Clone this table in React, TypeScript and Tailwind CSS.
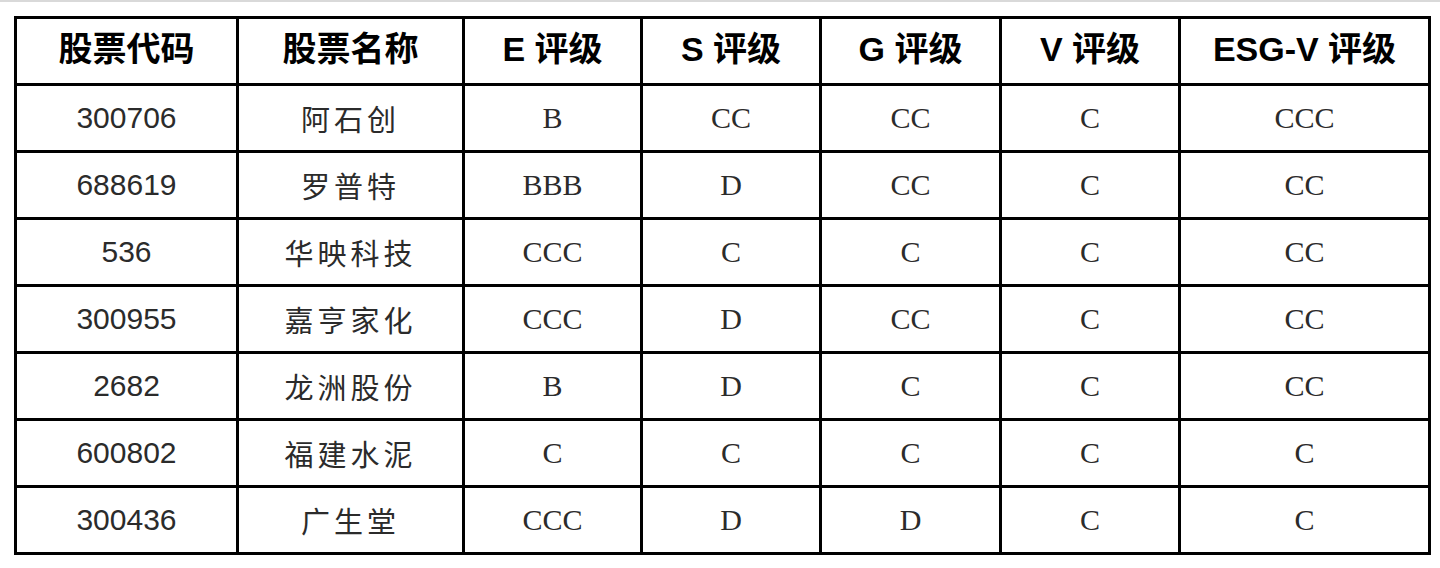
const rows = [
  ['300706', '阿石创', 'B', 'CC', 'CC', 'C', 'CCC'],
  ['688619', '罗普特', 'BBB', 'D', 'CC', 'C', 'CC'],
  ['536', '华映科技', 'CCC', 'C', 'C', 'C', 'CC'],
  ['300955', '嘉亨家化', 'CCC', 'D', 'CC', 'C', 'CC'],
  ['2682', '龙洲股份', 'B', 'D', 'C', 'C', 'CC'],
  ['600802', '福建水泥', 'C', 'C', 'C', 'C', 'C'],
  ['300436', '广生堂', 'CCC', 'D', 'D', 'C', 'C'],
];

const headers = ['股票代码', '股票名称', 'E 评级', 'S 评级', 'G 评级', 'V 评级', 'ESG-V 评级'];
const widths = [222, 226, 178, 179, 180, 179, 250];

export default function App() {
  return (
    <div className="min-h-[568px] w-[1440px] bg-white">
      <div className="h-[2px] bg-[#d9d9d9]" />
      <div className="pl-[14px] pt-[14px]">
        <table className="border-collapse border-[3px] border-black text-center">
          <colgroup>
            {widths.map((w, i) => (
              <col key={i} style={{ width: w }} />
            ))}
          </colgroup>
          <thead>
            <tr>
              {headers.map((h) => (
                <th
                  key={h}
                  className="h-[67px] border-[3px] border-black pb-[4px] text-[34px] font-bold leading-none text-black [font-family:'Liberation_Sans','Noto_Sans_CJK_SC',sans-serif]"
                >
                  {h}
                </th>
              ))}
            </tr>
          </thead>
          <tbody>
            {rows.map((r) => (
              <tr key={r[0]}>
                <td className="h-[67px] border-[3px] border-black text-[30px] leading-none text-[#2b2b2b] [font-family:'Liberation_Sans',sans-serif]">
                  {r[0]}
                </td>
                <td className="h-[67px] border-[3px] border-black text-[29px] leading-none tracking-[4px] text-[#2b2b2b] [font-family:'Noto_Sans_CJK_SC',sans-serif]">
                  {r[1]}
                </td>
                {r.slice(2).map((g, i) => (
                  <td
                    key={i}
                    className="h-[67px] border-[3px] border-black text-[30px] leading-none text-[#2b2b2b] [font-family:'Liberation_Serif',serif]"
                  >
                    {g}
                  </td>
                ))}
              </tr>
            ))}
          </tbody>
        </table>
      </div>
    </div>
  );
}
